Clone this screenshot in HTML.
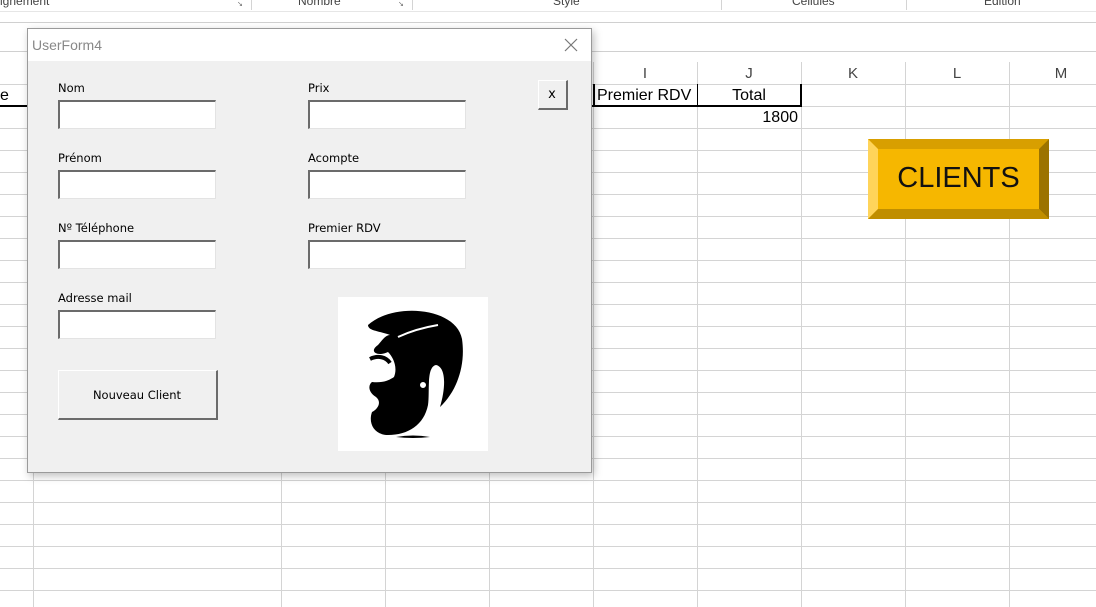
<!DOCTYPE html>
<html><head><meta charset="utf-8"><style>
body{margin:0;width:1096px;height:607px;overflow:hidden;background:#fff;position:relative;font-family:"Liberation Sans",sans-serif}
.a{position:absolute}
.vl{position:absolute;width:1px;background:#d4d4d4}
.hl{position:absolute;height:1px;background:#d4d4d4;left:0;width:1096px}
.lbl{position:absolute;font-family:"DejaVu Sans",sans-serif;font-size:11.5px;color:#000}
.inp{position:absolute;width:155px;height:26px;background:#fff;border-top:2px solid #6b6b6b;border-left:2px solid #6b6b6b;border-bottom:1px solid #e3e3e3;border-right:1px solid #e3e3e3}
.col{position:absolute;top:65px;font-size:15px;color:#444;width:104px;text-align:center}
</style></head><body>
<div class="a" style="left:0;top:-6px;font-size:12px;color:#444">ignement</div>
<div class="a" style="left:298px;top:-6px;font-size:12px;color:#444">Nombre</div>
<div class="a" style="left:553px;top:-6px;font-size:12px;color:#444">Style</div>
<div class="a" style="left:792px;top:-6px;font-size:12px;color:#444">Cellules</div>
<div class="a" style="left:984px;top:-6px;font-size:12px;color:#444">Edition</div>
<div class="a" style="left:237px;top:0;font-size:7px;color:#666">↘</div>
<div class="a" style="left:398px;top:0;font-size:7px;color:#666">↘</div>
<div class="vl" style="left:251px;top:0;height:10px"></div>
<div class="vl" style="left:412px;top:0;height:10px"></div>
<div class="vl" style="left:721px;top:0;height:10px"></div>
<div class="vl" style="left:906px;top:0;height:10px"></div>
<div class="hl" style="top:11px;background:#e6e6e6"></div>
<div class="hl" style="top:22px;background:#d0d0d0"></div>
<div class="hl" style="top:51px;background:#d0d0d0"></div>
<div class="a" style="left:0;top:84px;width:1096px;height:523px;background:repeating-linear-gradient(to bottom,#d4d4d4 0,#d4d4d4 1px,transparent 1px,transparent 22px)"></div>
<div class="vl" style="left:33px;top:62px;height:545px"></div>
<div class="vl" style="left:281px;top:62px;height:545px"></div>
<div class="vl" style="left:385px;top:62px;height:545px"></div>
<div class="vl" style="left:489px;top:62px;height:545px"></div>
<div class="vl" style="left:593px;top:62px;height:545px"></div>
<div class="vl" style="left:697px;top:62px;height:545px"></div>
<div class="vl" style="left:801px;top:62px;height:545px"></div>
<div class="vl" style="left:905px;top:62px;height:545px"></div>
<div class="vl" style="left:1009px;top:62px;height:545px"></div>
<div class="col" style="left:593px">I</div>
<div class="col" style="left:697px">J</div>
<div class="col" style="left:801px">K</div>
<div class="col" style="left:905px">L</div>
<div class="col" style="left:1009px">M</div>
<div class="a" style="left:0;top:105px;width:802px;height:2px;background:#000"></div>
<div class="a" style="left:593px;top:84px;width:2px;height:22px;background:#000"></div>
<div class="a" style="left:697px;top:84px;width:1px;height:22px;background:#000"></div>
<div class="a" style="left:800px;top:84px;width:2px;height:22px;background:#000"></div>
<div class="a" style="left:0;top:87px;font-size:16px">e</div>
<div class="a" style="left:597px;top:87px;font-size:16px">Premier RDV</div>
<div class="a" style="left:697px;top:87px;width:104px;text-align:center;font-size:16px">Total</div>
<div class="a" style="left:697px;top:109px;width:101px;text-align:right;font-size:16px">1800</div>
<div class="a" style="left:868px;top:139px;width:181px;height:80px;background:#f6b700">
<svg width="181" height="80" style="position:absolute;left:0;top:0"><polygon points="0,0 181,0 171,10 10,10" fill="#d89f00"/><polygon points="0,0 10,10 10,70 0,80" fill="#ffd45a"/><polygon points="181,0 181,80 171,70 171,10" fill="#9c7300"/><polygon points="0,80 10,70 171,70 181,80" fill="#c08e00"/></svg>
<div class="a" style="left:0;top:23px;width:181px;text-align:center;font-size:29px;color:#111">CLIENTS</div></div>
<div class="a" style="left:27px;top:28px;width:563px;height:443px;background:#f0f0f0;border:1px solid #9a9a9a;box-shadow:2px 3px 8px rgba(0,0,0,.25)">
<div class="a" style="left:0;top:0;width:563px;height:32px;background:#fff"></div>
<div class="a" style="left:4px;top:8px;font-size:14px;color:#888">UserForm4</div>
<svg class="a" style="left:536px;top:9px" width="14" height="14"><path d="M1 1L13 13M13 1L1 13" stroke="#777" stroke-width="1.2"/></svg>
</div>
<div class="lbl" style="left:58px;top:81px">Nom</div><div class="inp" style="left:58px;top:100px"></div>
<div class="lbl" style="left:58px;top:151px">Prénom</div><div class="inp" style="left:58px;top:170px"></div>
<div class="lbl" style="left:58px;top:221px">Nº Téléphone</div><div class="inp" style="left:58px;top:240px"></div>
<div class="lbl" style="left:58px;top:291px">Adresse mail</div><div class="inp" style="left:58px;top:310px"></div>
<div class="lbl" style="left:308px;top:81px">Prix</div><div class="inp" style="left:308px;top:100px"></div>
<div class="lbl" style="left:308px;top:151px">Acompte</div><div class="inp" style="left:308px;top:170px"></div>
<div class="lbl" style="left:308px;top:221px">Premier RDV</div><div class="inp" style="left:308px;top:240px"></div>
<div class="a" style="left:58px;top:370px;width:157px;height:47px;background:#f0f0f0;border-top:1px solid #fff;border-left:1px solid #fff;border-right:2px solid #6b6b6b;border-bottom:2px solid #6b6b6b;box-sizing:content-box"></div>
<div class="lbl" style="left:58px;top:388px;width:158px;text-align:center">Nouveau Client</div>
<div class="a" style="left:538px;top:80px;width:27px;height:27px;background:#f0f0f0;border-top:1px solid #fff;border-left:1px solid #fff;border-right:2px solid #6b6b6b;border-bottom:2px solid #6b6b6b"></div>
<div class="lbl" style="left:538px;top:87px;width:28px;text-align:center;font-size:13px">x</div>
<div class="a" style="left:338px;top:297px;width:150px;height:154px;background:#fff">
<svg width="150" height="154" viewBox="0 0 150 154">
<path d="M30 28 C55 5 118 10 124 42 C128 70 118 95 102 110 C108 90 108 70 98 68 C88 70 92 95 90 108 C86 128 70 138 50 138 C36 138 30 126 34 115 C40 112 44 105 38 100 C30 95 30 88 34 85 C44 86 50 84 56 80 C60 70 55 60 50 55 C40 60 30 55 40 48 C45 42 48 38 52 38 C42 34 30 34 30 28 Z" fill="#000"/>
<path d="M60 40 C75 33 88 30 100 28" stroke="#fff" stroke-width="2" fill="none"/>
<path d="M32 62 C40 58 48 60 52 66" stroke="#000" stroke-width="4" fill="none"/>
<circle cx="55" cy="76" r="1.3" fill="#fff"/><circle cx="85" cy="88" r="3.5" fill="#fff" stroke="#000" stroke-width="1"/>
<path d="M58 140 Q75 137 92 140 Q75 142 58 140Z" fill="#000"/>
</svg></div>
</body></html>
